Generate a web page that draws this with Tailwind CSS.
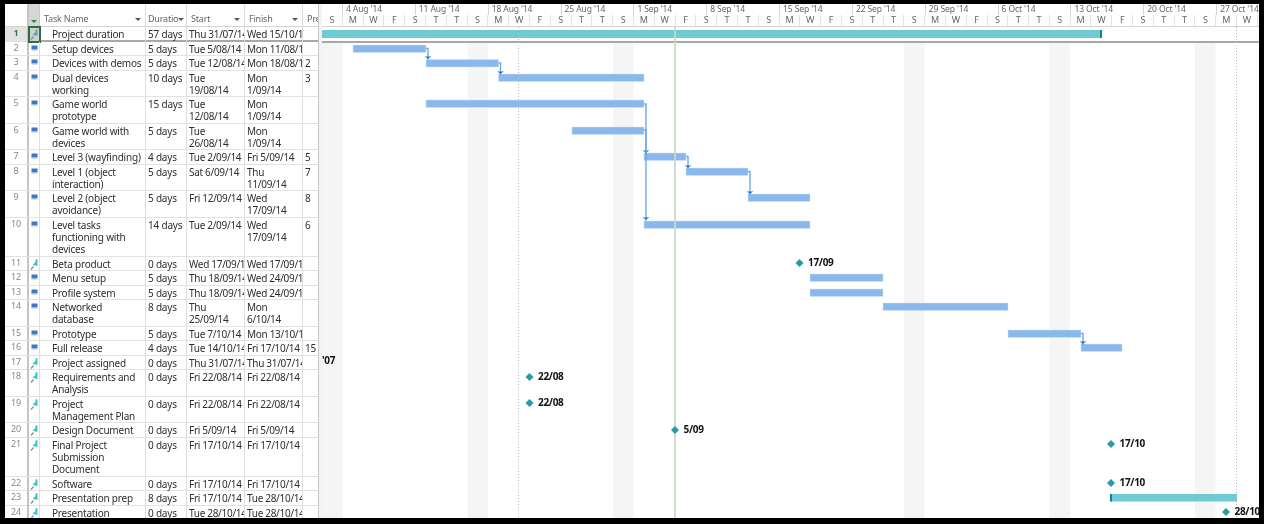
<!DOCTYPE html>
<html lang="en">
<head>
    <meta charset="UTF-8">
    <script src="https://cdn.jsdelivr.net/npm/@tailwindcss/browser@4"></script>
    <title>Project Gantt</title>
</head>
<body class="bg-black w-[1264px] h-[524px] overflow-hidden">
    <div class="ml-[5px] mt-1 w-[1254px] h-[514px] bg-white flex overflow-hidden font-['Noto_Sans',sans-serif] text-[#2e2e2e] blur-[0.35px]">
        <!-- task sheet -->
        <div class="w-[314px] shrink-0 border-r border-[#c8c8c8]">
            <div class="grid grid-cols-[24px_11px_106px_41px_58px_58px_15px] h-[23px] text-[9px] tracking-[-0.2px] text-[#666] border-b border-[#d4d4d4]">
                <div class="border-r-2 border-[#c4c4c4]"></div>
                <div class="bg-[#d6d6d6] border-r border-[#c8c8c8] flex items-end justify-center pb-[3px]"><span class="border-x-[3px] border-t-[3px] border-x-transparent border-t-[#2f7d4a]"></span></div>
                <div class="border-r border-[#dcdcdc] flex items-center justify-between pt-2 pl-1 pr-[4px]">Task Name<span class="border-x-[3px] border-t-[3px] border-x-transparent border-t-[#555]"></span></div>
                <div class="border-r border-[#dcdcdc] flex items-center justify-between pt-2 pl-[2px] pr-[3px] overflow-hidden">Duratio<span class="border-x-[3px] border-t-[3px] border-x-transparent border-t-[#555]"></span></div>
                <div class="border-r border-[#dcdcdc] flex items-center justify-between pt-2 pl-1 pr-[4px]">Start<span class="border-x-[3px] border-t-[3px] border-x-transparent border-t-[#555]"></span></div>
                <div class="border-r border-[#dcdcdc] flex items-center justify-between pt-2 pl-1 pr-[4px]">Finish<span class="border-x-[3px] border-t-[3px] border-x-transparent border-t-[#555]"></span></div>
                <div class="flex items-center pt-2 pl-1 overflow-hidden">Pre</div>
            </div>
            <div id="rows"></div>
        </div>
        <div class="w-[3px] shrink-0 bg-[#f3f3f3]"></div>
        <!-- gantt -->
        <div class="flex-1 min-w-0 relative">
            <div class="h-[23px] border-b border-[#d4d4d4] text-[#666] text-[8.5px] tracking-[-0.1px] overflow-hidden">
                <div id="weeks" class="flex h-[11px] pl-[20px] whitespace-nowrap"></div>
                <div id="days" class="flex h-[11px] text-[9px]"></div>
            </div>
            <svg id="chart" class="absolute left-0 top-0" width="937" height="514" viewBox="322 4 937 514"></svg>
        </div>
    </div>

    <script>
        // lines, name, duration, start, finish, pred, icon type
        const tasks = [
            [1, "Project duration", "57 days", "Thu 31/07/14", "Wed 15/10/14", "", "p"],
            [1, "Setup devices", "5 days", "Tue 5/08/14", "Mon 11/08/14", "", "t"],
            [1, "Devices with demos", "5 days", "Tue 12/08/14", "Mon 18/08/14", "2", "t"],
            [2, "Dual devices\nworking", "10 days", "Tue\n19/08/14", "Mon\n1/09/14", "3", "t"],
            [2, "Game world\nprototype", "15 days", "Tue\n12/08/14", "Mon\n1/09/14", "", "t"],
            [2, "Game world with\ndevices", "5 days", "Tue\n26/08/14", "Mon\n1/09/14", "", "t"],
            [1, "Level 3 (wayfinding)", "4 days", "Tue 2/09/14", "Fri 5/09/14", "5", "t"],
            [2, "Level 1 (object\ninteraction)", "5 days", "Sat 6/09/14", "Thu\n11/09/14", "7", "t"],
            [2, "Level 2 (object\navoidance)", "5 days", "Fri 12/09/14", "Wed\n17/09/14", "8", "t"],
            [3, "Level tasks\nfunctioning with\ndevices", "14 days", "Tue 2/09/14", "Wed\n17/09/14", "6", "t"],
            [1, "Beta product", "0 days", "Wed 17/09/14", "Wed 17/09/14", "", "p"],
            [1, "Menu setup", "5 days", "Thu 18/09/14", "Wed 24/09/14", "", "t"],
            [1, "Profile system", "5 days", "Thu 18/09/14", "Wed 24/09/14", "", "t"],
            [2, "Networked\ndatabase", "8 days", "Thu\n25/09/14", "Mon\n6/10/14", "", "t"],
            [1, "Prototype", "5 days", "Tue 7/10/14", "Mon 13/10/14", "", "t"],
            [1, "Full release", "4 days", "Tue 14/10/14", "Fri 17/10/14", "15", "t"],
            [1, "Project assigned", "0 days", "Thu 31/07/14", "Thu 31/07/14", "", "p"],
            [2, "Requirements and\nAnalysis", "0 days", "Fri 22/08/14", "Fri 22/08/14", "", "p"],
            [2, "Project\nManagement Plan", "0 days", "Fri 22/08/14", "Fri 22/08/14", "", "p"],
            [1, "Design Document", "0 days", "Fri 5/09/14", "Fri 5/09/14", "", "p"],
            [3, "Final Project\nSubmission\nDocument", "0 days", "Fri 17/10/14", "Fri 17/10/14", "", "p"],
            [1, "Software", "0 days", "Fri 17/10/14", "Fri 17/10/14", "", "p"],
            [1, "Presentation prep", "8 days", "Fri 17/10/14", "Tue 28/10/14", "", "p"],
            [1, "Presentation", "0 days", "Tue 28/10/14", "Tue 28/10/14", "", "p"],
        ];
        const heights = { 1: "h-[14.5px]", 2: "h-[26.5px]", 3: "h-[39px]" };
        const taskIcon = '<svg width="7" height="6" viewBox="0 0 7 6"><rect x="0.5" y="0.5" width="6" height="4" fill="#3f78bd"/><rect x="0.5" y="4.5" width="6" height="1" fill="#9dbde0"/></svg>';
        const pinIcon = c => `<svg width="8" height="13" viewBox="0 0 8 13"><path d="M6 0 L7.5 0.5 L7.5 7 L5 6.5 L2.5 5.5 L5 3.5 Z" fill="${c}"/><path d="M1 10.5 L3.5 7.5" stroke="#7d8f91" stroke-width="1.2"/></svg>`;

        const cell = "border-r border-[#dedede] overflow-x-clip whitespace-pre leading-[12px] pt-[1px]";
        const dateCell = cell + " tracking-[-0.3px] pl-[2px]";
        document.getElementById("rows").innerHTML = tasks.map((t, i) => {
            const first = i === 0;
            return `<div class="grid grid-cols-[24px_11px_106px_41px_58px_58px_15px] ${heights[t[0]]} text-[10px] tracking-[-0.2px] border-b ${first ? "border-b-2 border-[#a8a8a8]" : "border-[#e2e2e2]"}">
                <div class="border-r-2 border-[#c4c4c4] text-center text-[9px] leading-[12px] ${first ? "bg-[#e3e3e3] font-bold text-[#2f7d4a]" : "text-[#888]"}">${i + 1}</div>
                <div class="relative border-r border-[#dedede] flex justify-center ${t[6] === "t" ? "pt-[3px]" : "pt-[2px]"} ${first ? "outline-2 -outline-offset-1 outline-[#2c6e3f] bg-[#d0d0d0]" : ""}">${t[6] === "t" ? taskIcon : pinIcon(first ? "#5ea8b0" : "#3cc7c3")}</div>
                <div class="${cell} pl-3">${t[1]}</div>
                <div class="${cell} pl-[2px]">${t[2]}</div>
                <div class="${dateCell}">${t[3]}</div>
                <div class="${dateCell}">${t[4]}</div>
                <div class="overflow-x-clip leading-[12px] pt-[1px] pl-[2px]">${t[5]}</div>
            </div>`;
        }).join("");

        // timescale
        const weekNames = ["4 Aug '14", "11 Aug '14", "18 Aug '14", "25 Aug '14", "1 Sep '14", "8 Sep '14", "15 Sep '14", "22 Sep '14", "29 Sep '14", "6 Oct '14", "13 Oct '14", "20 Oct '14", "27 Oct '14"];
        document.getElementById("weeks").innerHTML = weekNames.map(w =>
            `<div class="w-[72.85px] shrink-0 border-l border-[#d4d4d4] pl-[3px] leading-[9px] overflow-hidden">${w}</div>`).join("");
        const dayNames = "SMWFSTTSMWFSTTSMWFSTTSMWFSTTSMWFSTTSMWFSTTSMW".split("");
        document.getElementById("days").innerHTML = dayNames.map(d =>
            `<div class="w-[20.81px] shrink-0 border-r border-[#e2e2e2] text-center leading-[10px]">${d}</div>`).join("");

        // chart
        const blue = [[353, 426, 45], [426, 498.5, 59.5], [498.5, 644, 74], [426, 644, 100], [572, 644, 127], [644, 686, 153], [686, 748, 168], [748, 810, 194], [644, 810, 221], [810, 883, 274], [810, 883, 289], [883, 1008, 303], [1008, 1081, 330], [1081, 1122, 344]];
        const marks = [[799.5, 263, "17/09"], [529.5, 377, "22/08"], [529.5, 403, "22/08"], [675, 430, "5/09"], [1111, 444, "17/10"], [1111, 483, "17/10"], [1226, 512, "28/10"]];
        const links = [[426, 48.5, 428, 58], [498.5, 63, 500.5, 73], [644, 104, 646, 152], [644, 130, 646, 152], [646, 152, 646, 219], [686, 156.5, 688, 167], [748, 171.5, 750, 193], [1081, 333.5, 1083, 343]];
        let svg = "";
        [322, 467.5, 613, 904, 1049.5, 1195].forEach(x => { svg += `<rect x="${x}" y="43" width="20.5" height="480" fill="#f5f5f5"/>`; });
        svg += `<rect x="322" y="41" width="937" height="2" fill="#a8a8a8"/>`;
        svg += `<rect x="322" y="30" width="780" height="8" fill="#6fcbd3"/><rect x="1100" y="30" width="2" height="8" fill="#14838c"/>`;
        blue.forEach(b => { svg += `<rect x="${b[0]}" y="${b[2]}" width="${b[1] - b[0]}" height="7.5" fill="#8ab8ec" stroke="#d3e4f7" stroke-width="0.5"/>`; });
        svg += `<rect x="1110" y="494" width="127" height="7.5" fill="#6fcbd3"/><rect x="1110" y="494" width="2" height="7.5" fill="#14838c"/>`;
        svg += `<line x1="518.5" y1="27" x2="518.5" y2="520" stroke="#b8b8b8" stroke-dasharray="1 2"/>`;
        svg += `<line x1="1236.5" y1="27" x2="1236.5" y2="520" stroke="#b8b8b8" stroke-dasharray="1 2"/>`;
        svg += `<rect x="674" y="27" width="2" height="492" fill="#c6dcc4" fill-opacity="0.85"/>`;
        links.forEach(l => {
            svg += `<path d="M${l[0]} ${l[1]} H${l[2]} V${l[3]}" fill="none" stroke="#6ea8e6" stroke-width="1.4"/>`;
            if (l[3] !== 152 || l[1] === 104) svg += `<path d="M${l[2] - 3.5} ${l[3] - 1.5} h7 l-2.5 1.5 l-1 2 l-1 -2 z" fill="#1f77d0"/>`;
        });
        marks.forEach(m => {
            svg += `<path d="M${m[0]} ${m[1] - 4} l4 4 l-4 4 l-4 -4 z" fill="#2a9aa6"/>`;
            svg += `<text x="${m[0] + 8.5}" y="${m[1] + 2.5}" font-size="10" letter-spacing="-0.3" font-weight="700" fill="#111">${m[2]}</text>`;
        });
        svg += `<text x="322" y="364" font-size="10" letter-spacing="-0.3" font-weight="700" fill="#111">'07</text>`;
        document.getElementById("chart").innerHTML = svg;
    </script>
</body>
</html>
